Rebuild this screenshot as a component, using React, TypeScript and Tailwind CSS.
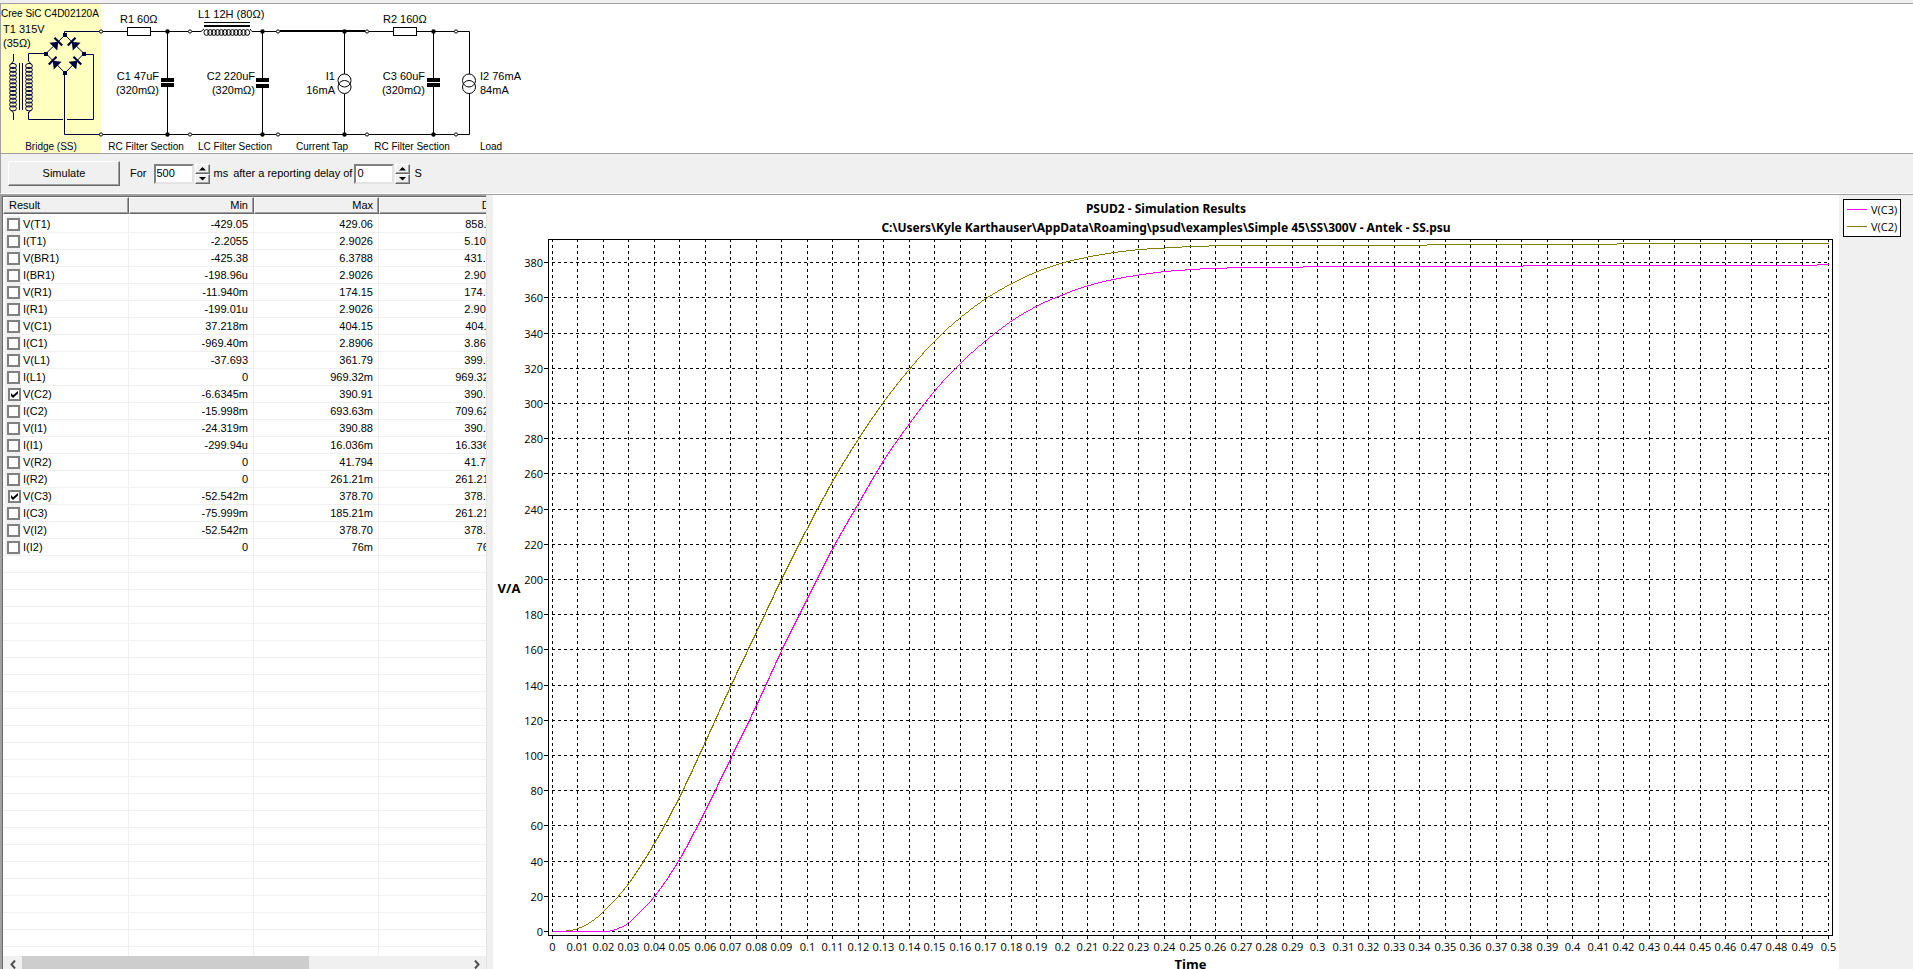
import { useLayoutEffect, useRef, useState } from "react";
import type { ReactNode } from "react";

type Row = [name: string, min: string, max: string, diff: string];

const RESULTS: Row[] = [
  ["V(T1)", "-429.05", "429.06", "858.11"],
  ["I(T1)", "-2.2055", "2.9026", "5.1081"],
  ["V(BR1)", "-425.38", "6.3788", "431.76"],
  ["I(BR1)", "-198.96u", "2.9026", "2.9028"],
  ["V(R1)", "-11.940m", "174.15", "174.16"],
  ["I(R1)", "-199.01u", "2.9026", "2.9028"],
  ["V(C1)", "37.218m", "404.15", "404.11"],
  ["I(C1)", "-969.40m", "2.8906", "3.8600"],
  ["V(L1)", "-37.693", "361.79", "399.48"],
  ["I(L1)", "0", "969.32m", "969.32m"],
  ["V(C2)", "-6.6345m", "390.91", "390.92"],
  ["I(C2)", "-15.998m", "693.63m", "709.62m"],
  ["V(I1)", "-24.319m", "390.88", "390.90"],
  ["I(I1)", "-299.94u", "16.036m", "16.336m"],
  ["V(R2)", "0", "41.794", "41.794"],
  ["I(R2)", "0", "261.21m", "261.21m"],
  ["V(C3)", "-52.542m", "378.70", "378.75"],
  ["I(C3)", "-75.999m", "185.21m", "261.21m"],
  ["V(I2)", "-52.542m", "378.70", "378.75"],
  ["I(I2)", "0", "76m", "76m"],
];

type Point = [t: number, v: number];

const VC2: Point[] = [
  [0, 0], [0.005, 0.2], [0.01, 1.7], [0.015, 5.4], [0.02, 11.2], [0.03, 27.5], [0.04, 50.2],
  [0.05, 77], [0.06, 108], [0.07, 139.8], [0.08, 170.3], [0.09, 200.8], [0.1, 229.4],
  [0.11, 256.3], [0.12, 280], [0.13, 301.2], [0.14, 319.6], [0.15, 335.9], [0.16, 348.9],
  [0.17, 359.7], [0.18, 368.1], [0.19, 374.9], [0.2, 379.8], [0.21, 383.2], [0.22, 385.7],
  [0.23, 387.4], [0.24, 388.3], [0.25, 389.1], [0.26, 389.5], [0.341, 390.0], [0.417, 390.58],
  [0.5, 390.9],
];

const VC3: Point[] = [
  [0, 0], [0.01, 0], [0.02, 0], [0.0225, 0.3], [0.025, 1.3], [0.03, 5.1], [0.04, 20], [0.05, 41.5],
  [0.06, 69], [0.07, 98.7], [0.08, 128.6], [0.09, 160.2], [0.1, 189.6], [0.11, 218], [0.12, 243.4],
  [0.13, 268], [0.14, 288.7], [0.15, 307.5], [0.16, 323], [0.17, 335.9], [0.18, 346.9],
  [0.19, 355.4], [0.2, 361.8], [0.21, 366.9], [0.22, 370.5], [0.23, 373], [0.24, 374.9],
  [0.25, 376], [0.26, 376.8], [0.293, 377.5], [0.38, 378.08], [0.4957, 378.65], [0.5, 378.7],
];

/* Samples a Catmull-Rom spline through the points. */
function valueAt(points: Point[], t: number): number {
  let i = 0;
  while (i < points.length - 2 && points[i + 1][0] < t) i++;
  const slope = (k: number) => {
    const a = points[Math.max(0, k - 1)];
    const b = points[Math.min(points.length - 1, k + 1)];
    return (b[1] - a[1]) / (b[0] - a[0]);
  };
  const [t0, v0] = points[i];
  const [t1, v1] = points[i + 1];
  const h = t1 - t0;
  const s = (t - t0) / h;
  const s2 = s * s;
  const s3 = s2 * s;
  return (
    (2 * s3 - 3 * s2 + 1) * v0 +
    (s3 - 2 * s2 + s) * h * slope(i) +
    (3 * s2 - 2 * s3) * v1 +
    (s3 - s2) * h * slope(i + 1)
  );
}

function Chart() {
  const box = useRef<HTMLDivElement>(null);
  const [size, setSize] = useState({ w: 1346, h: 774 });

  useLayoutEffect(() => {
    const el = box.current;
    if (!el) return;
    const measure = () => setSize({ w: el.clientWidth, h: el.clientHeight });
    measure();
    const observer = new ResizeObserver(measure);
    observer.observe(el);
    return () => observer.disconnect();
  }, []);

  const left = 55;
  const top = 44;
  const right = size.w - 6;
  const bottom = size.h - 34;
  const x0 = left + 4;
  const x1 = right - 5;
  const yZero = bottom - 4;
  const perVolt = (yZero - top - 2) / 392;
  const px = (t: number) => Math.floor(x0 + (t / 0.5) * (x1 - x0)) + 0.5;
  const py = (v: number) => Math.round(yZero - v * perVolt) + 0.5;
  const xTicks = Array.from({ length: 51 }, (_, i) => i / 100);
  const yTicks = Array.from({ length: 20 }, (_, i) => i * 20);

  const trace = (points: Point[]) => {
    const out: string[] = [];
    for (let x = x0; x <= x1; x++) {
      const v = Math.max(0, valueAt(points, ((x - x0) / (x1 - x0)) * 0.5));
      out.push(`${x + 0.5},${py(v)}`);
    }
    return out.join(" ");
  };

  return (
    <div ref={box} className="min-w-0 flex-1 overflow-hidden bg-white">
      <svg
        width={size.w}
        height={size.h}
        className="block font-['Open_Sans',sans-serif]"
        role="img"
        aria-label="PSUD2 simulation results"
      >
        <g shapeRendering="crispEdges" stroke="black" fill="none">
          {xTicks.map((t) => (
            <g key={t}>
              <path d={`M${px(t)} ${top}V${yZero}`} strokeDasharray="3 3" />
              <path d={`M${px(t)} ${bottom}v4`} />
            </g>
          ))}
          {yTicks.map((v) => (
            <g key={v}>
              <path d={`M${x0} ${py(v)}H${x1}`} strokeDasharray="3 3" />
              <path d={`M${left - 4} ${py(v)}h4`} />
            </g>
          ))}
          <rect x={left + 0.5} y={top + 0.5} width={right - left - 1} height={bottom - top} />
          <polyline points={trace(VC2)} stroke="#808000" />
          <polyline points={trace(VC3)} stroke="#ff00ff" />
        </g>
        <g fontSize="11" textAnchor="middle">
          {xTicks.map((t) => (
            <text key={t} x={px(t)} y={bottom + 16}>
              {t}
            </text>
          ))}
        </g>
        <g fontSize="11" textAnchor="end">
          {yTicks.map((v) => (
            <text key={v} x={left - 5} y={py(v) + 4}>
              {v}
            </text>
          ))}
        </g>
        <g fontWeight="700" textAnchor="middle">
          <g fontSize="12" className="font-['Noto_Sans',sans-serif]">
            <text x={size.w / 2} y="18">
              PSUD2 - Simulation Results
            </text>
            <text x={size.w / 2} y="37">
              C:\Users\Kyle Karthauser\AppData\Roaming\psud\examples\Simple 45\SS\300V - Antek - SS.psu
            </text>
          </g>
          <text x="16" y={size.h / 2 + 11} fontSize="13">
            V/A
          </text>
          <text x={(left + right) / 2} y={size.h} fontSize="13">
            Time
          </text>
        </g>
      </svg>
    </div>
  );
}

function Terminal({ x, y }: { x: number; y: number }) {
  return <circle cx={x} cy={y} r="1.6" fill="white" strokeWidth="1" />;
}

function Capacitor({ x, gap }: { x: number; gap: number }) {
  return (
    <g>
      <path d={`M${x} 31.5V78M${x} ${82 + gap}V134.5`} />
      <rect x={x - 6.5} y="78" width="13" height="4" fill="black" stroke="none" />
      <rect x={x - 6.5} y={82 + gap} width="13" height="4" fill="black" stroke="none" />
      <circle cx={x} cy="31.5" r="2.2" fill="black" stroke="none" />
      <circle cx={x} cy="134.5" r="2.2" fill="black" stroke="none" />
    </g>
  );
}

function CurrentSource({ x }: { x: number }) {
  return (
    <g>
      <circle cx={x} cy="80.5" r="6.5" />
      <circle cx={x} cy="87" r="6.5" />
    </g>
  );
}

function Diode({ x, y, turn }: { x: number; y: number; turn: number }) {
  return (
    <g transform={`translate(${x} ${y}) rotate(${turn})`} stroke="none" fill="#000040">
      <path d="M-4.5 -5.5L2.5 0L-4.5 5.5Z" />
      <rect x="1.5" y="-5.5" width="2.2" height="11" />
    </g>
  );
}

function Coil({ x, y }: { x: number; y: number }) {
  return (
    <g>
      {Array.from({ length: 12 }, (_, i) => (
        <ellipse key={i} cx={x} cy={y + i * 3.85} rx="3.4" ry="2.6" />
      ))}
    </g>
  );
}

function Circuit() {
  return (
    <svg
      viewBox="1 4 560 149"
      width="560"
      height="149"
      className="block shrink-0 font-['Liberation_Sans',Arial,sans-serif]"
      role="img"
      aria-label="Power supply circuit"
    >
      <rect x="1" y="4" width="100" height="149" fill="#ffffc0" />

      <g stroke="#000040" fill="none">
        <path d="M64.5 35V31.5H100M28.5 61V53.5H46M84 54.5H93.5V119.5H67M63 119.5H28.5V112M64.5 73V134.5H100" />
        <path d="M65 35L46 53.5L65 73L84 53.5Z" />
        <path d="M13.5 54V61L11 64M13.5 120V113L11 110M28.5 61L31 64M28.5 113L31 110" />
        <path d="M19.5 63V110M22.5 63V110" />
        <Coil x={13} y={66} />
        <Coil x={29} y={66} />
        <g fill="#000040" stroke="none">
          <rect x="63" y="33" width="4" height="4" />
          <rect x="44" y="52" width="4" height="4" />
          <rect x="82" y="52" width="4" height="4" />
          <rect x="63" y="71" width="4" height="4" />
        </g>
        <Diode x={56.5} y={43.5} turn={-45} />
        <Diode x={73.5} y={43.5} turn={-135} />
        <Diode x={54.5} y={62.5} turn={-135} />
        <Diode x={75.5} y={62.5} turn={-45} />
      </g>

      <g stroke="black" fill="none">
        <path d="M103 31.5H127M151 31.5H188M192 31.5H201L204 29M250 29L252 31.5H276M369 31.5H393M417 31.5H454M458 31.5H469.5V74M469.5 94V134.5H458" />
        <path d="M103 134.5H188M192 134.5H276M280 134.5H365M369 134.5H454M344.5 31V74M344.5 94V134.5" />
        <path d="M280 31H365" strokeWidth="2" />
        <rect x="127.5" y="27.5" width="23" height="8" />
        <rect x="393.5" y="27.5" width="23" height="8" />
        <path d="M204 22.5H250" />
        <path d="M204 26H250" strokeWidth="2" />
        {Array.from({ length: 12 }, (_, i) => (
          <ellipse key={i} cx={206.5 + i * 3.7} cy="32.5" rx="2.5" ry="2.9" />
        ))}
        <Capacitor x={167.5} gap={1} />
        <Capacitor x={262.5} gap={2} />
        <Capacitor x={433.5} gap={1} />
        <CurrentSource x={344.5} />
        <CurrentSource x={469} />
        <g fill="black" stroke="none">
          <circle cx="344.5" cy="31.5" r="2.2" />
          <circle cx="344.5" cy="134.5" r="2.2" />
        </g>
        {[101, 190, 278, 367, 456].map((x) => (
          <g key={x}>
            <Terminal x={x} y={31.5} />
            <Terminal x={x} y={134.5} />
          </g>
        ))}
      </g>

      <text x="1" y="17" fontSize="10">Cree SiC C4D02120A</text>
      <g fontSize="11">
        <text x="3" y="33">T1 315V</text>
        <text x="3" y="47">(35Ω)</text>
        <text x="120" y="23">R1 60Ω</text>
        <text x="198" y="18">L1 12H (80Ω)</text>
        <text x="383" y="23">R2 160Ω</text>
        <g textAnchor="end">
          <text x="159" y="80">C1 47uF</text>
          <text x="159" y="94">(320mΩ)</text>
          <text x="255" y="80">C2 220uF</text>
          <text x="255" y="94">(320mΩ)</text>
          <text x="335" y="80">I1</text>
          <text x="335" y="94">16mA</text>
          <text x="425" y="80">C3 60uF</text>
          <text x="425" y="94">(320mΩ)</text>
        </g>
        <text x="480" y="80">I2 76mA</text>
        <text x="480" y="94">84mA</text>
      </g>
      <g fontSize="10" textAnchor="middle">
        <text x="51" y="150" fill="#000040">Bridge (SS)</text>
        <text x="146" y="150">RC Filter Section</text>
        <text x="235" y="150">LC Filter Section</text>
        <text x="322" y="150">Current Tap</text>
        <text x="412" y="150">RC Filter Section</text>
        <text x="491" y="150">Load</text>
      </g>
    </svg>
  );
}

function Spinner({ id, label, value }: { id: string; label: string; value: string }) {
  return (
    <div className="flex items-center gap-px">
      <input
        id={id}
        aria-label={label}
        defaultValue={value}
        className="h-5 w-10 border-2 border-t-[#808080] border-r-[#e3e3e3] border-b-[#e3e3e3] border-l-[#808080] bg-white px-px pb-0.5 outline-none"
      />
      <div className="flex flex-col">
        {["M0 3.5L3.5 0L7 3.5Z", "M0 0L3.5 3.5L7 0Z"].map((d, i) => (
          <button
            key={d}
            type="button"
            aria-label={i === 0 ? `Increase ${label}` : `Decrease ${label}`}
            className="flex h-[10px] w-[15px] items-center justify-center border border-t-white border-r-[#696969] border-b-[#696969] border-l-white bg-[#f0f0f0] shadow-[inset_-1px_-1px_0_#a0a0a0]"
          >
            <svg width="7" height="4" viewBox="0 0 7 4">
              <path d={d} />
            </svg>
          </button>
        ))}
      </div>
    </div>
  );
}

function Toolbar() {
  return (
    <div className="flex h-10 shrink-0 items-center border-b border-l border-b-white border-l-[#a0a0a0] bg-[#f0f0f0] pl-[7px]">
      <button
        type="button"
        className="h-[25px] w-28 border border-t-white border-r-[#696969] border-b-[#696969] border-l-white shadow-[inset_-1px_-1px_0_#a0a0a0]"
      >
        Simulate
      </button>
      <label htmlFor="duration" className="mr-[7px] ml-[10px]">
        For
      </label>
      <Spinner id="duration" label="duration" value="500" />
      <span className="ml-1">ms</span>
      <label htmlFor="delay" className="mr-0.5 ml-[5px]">
        after a reporting delay of
      </label>
      <Spinner id="delay" label="delay" value="0" />
      <span className="ml-1">S</span>
    </div>
  );
}

function HeaderCell({ children, align }: { children: ReactNode; align: string }) {
  return (
    <th
      className={`h-[17px] border-t border-r border-b border-l border-t-white border-r-[#696969] border-b-[#696969] border-l-white bg-[#f0f0f0] p-0 px-[5px] font-normal shadow-[inset_-1px_-1px_0_#a0a0a0] ${align}`}
    >
      {children}
    </th>
  );
}

const CHECKED = ["V(C2)", "V(C3)"];

function ResultList() {
  const blank = Array.from({ length: 26 }, (_, i) => i);
  const cell = "h-[17px] border-r border-b border-[#f0f0f0] p-0 pr-[5px] text-right";
  return (
    <div className="flex w-[487px] shrink-0 flex-col border-t-2 border-r border-l-2 border-t-[#a0a0a0] border-r-[#e3e3e3] border-l-[#a0a0a0] bg-white">
      <div className="flex min-h-0 flex-1 flex-col border-t border-l border-[#696969]">
        <div className="min-h-0 flex-1 overflow-hidden">
          <table className="w-[501px] table-fixed border-separate border-spacing-0 leading-[15px]">
            <colgroup>
              <col className="w-[126px]" />
              <col className="w-[125px]" />
              <col className="w-[125px]" />
              <col className="w-[125px]" />
            </colgroup>
            <thead>
              <tr>
                <HeaderCell align="text-left">Result</HeaderCell>
                <HeaderCell align="text-right">Min</HeaderCell>
                <HeaderCell align="text-right">Max</HeaderCell>
                <HeaderCell align="text-right">Diff</HeaderCell>
              </tr>
            </thead>
            <tbody>
              <tr aria-hidden="true">
                <td className="h-0.5 p-0" colSpan={4} />
              </tr>
              {RESULTS.map(([name, min, max, diff]) => (
                <tr key={name}>
                  <td className="h-[17px] border-r border-b border-[#f0f0f0] p-0 pl-0.5">
                    <label className="flex items-center gap-0.5">
                      <span className="flex h-4 w-4 items-center justify-center bg-[#f0f0f0]">
                        <input
                          type="checkbox"
                          defaultChecked={CHECKED.includes(name)}
                          className="peer h-[13px] w-[13px] shrink-0 appearance-none border-2 border-[#808080] bg-white"
                        />
                        <svg
                          viewBox="0 0 7 7"
                          className="pointer-events-none -ml-[10px] hidden h-[7px] w-[7px] shrink-0 peer-checked:block"
                        >
                          <path d="M0 2V5L2 7L7 2.5V0L2 4.3Z" />
                        </svg>
                      </span>
                      {name}
                    </label>
                  </td>
                  <td className={cell}>{min}</td>
                  <td className={cell}>{max}</td>
                  <td className={cell}>{diff}</td>
                </tr>
              ))}
              {blank.map((i) => (
                <tr key={i} aria-hidden="true">
                  <td className={cell} />
                  <td className={cell} />
                  <td className={cell} />
                  <td className={cell} />
                </tr>
              ))}
            </tbody>
          </table>
        </div>
        <div className="flex h-[13px] shrink-0 items-stretch bg-[#f0f0f0]">
          <button type="button" aria-label="Scroll left" className="flex w-[19px] items-end justify-center">
            <svg width="6" height="9" viewBox="0 0 6 9" fill="none" stroke="#505050" strokeWidth="2">
              <path d="M5 0.5L1.5 4.5L5 8.5" />
            </svg>
          </button>
          <div className="flex-1">
            <div className="h-full w-[64.5%] bg-[#cdcdcd]" />
          </div>
          <button type="button" aria-label="Scroll right" className="flex w-[19px] items-end justify-center">
            <svg width="6" height="9" viewBox="0 0 6 9" fill="none" stroke="#505050" strokeWidth="2">
              <path d="M1 0.5L4.5 4.5L1 8.5" />
            </svg>
          </button>
        </div>
      </div>
    </div>
  );
}

function Legend() {
  return (
    <aside className="w-[74px] shrink-0 bg-[#f0f0f0] pt-1 pl-1 font-['Open_Sans',sans-serif]">
      <ul className="w-[58px] border border-black bg-white py-px pl-[3px] leading-[17px]">
        <li className="flex items-center gap-1">
          <span className="h-px w-5 bg-[#ff00ff]" />
          V(C3)
        </li>
        <li className="flex items-center gap-1">
          <span className="h-px w-5 bg-[#808000]" />
          V(C2)
        </li>
      </ul>
    </aside>
  );
}

export default function App() {
  return (
    <div className="flex h-screen flex-col overflow-hidden bg-[#f0f0f0] font-['Liberation_Sans',Arial,sans-serif] text-[11px] text-black">
      <div className="mt-[3px] flex shrink-0 overflow-hidden border-t border-b border-l border-[#a0a0a0] bg-white">
        <Circuit />
      </div>
      <Toolbar />
      <main className="flex min-h-0 flex-1">
        <ResultList />
        <div className="flex min-w-0 flex-1 border-t border-[#a0a0a0] pl-[6px]">
          <Chart />
          <Legend />
        </div>
      </main>
    </div>
  );
}
